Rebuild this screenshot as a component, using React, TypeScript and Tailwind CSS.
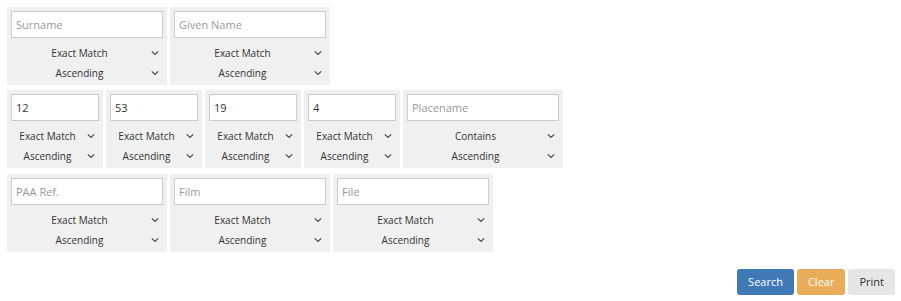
const font = { fontFamily: '"Open Sans", "Liberation Sans", sans-serif' };

type Field = {
  placeholder: string;
  value?: string;
  match: string;
  narrow?: boolean;
};

const rows: Field[][] = [
  [
    { placeholder: "Surname", match: "Exact Match" },
    { placeholder: "Given Name", match: "Exact Match" },
  ],
  [
    { placeholder: "", value: "12", match: "Exact Match", narrow: true },
    { placeholder: "", value: "53", match: "Exact Match", narrow: true },
    { placeholder: "", value: "19", match: "Exact Match", narrow: true },
    { placeholder: "", value: "4", match: "Exact Match", narrow: true },
    { placeholder: "Placename", match: "Contains" },
  ],
  [
    { placeholder: "PAA Ref.", match: "Exact Match" },
    { placeholder: "Film", match: "Exact Match" },
    { placeholder: "File", match: "Exact Match" },
  ],
];

function Chevron() {
  return (
    <svg width="8" height="5" viewBox="0 0 8 5" className="absolute right-[4px] top-1/2 -translate-y-1/2">
      <path d="M0.8 0.8 L4 3.9 L7.2 0.8" fill="none" stroke="#444" strokeWidth="1.1" />
    </svg>
  );
}

function SelectRow({ label }: { label: string }) {
  return (
    <div className="relative flex h-[20px] items-center pl-[2px] pr-[17px] text-[10px] text-[#333]">
      <span className="block w-full whitespace-nowrap text-center">{label}</span>
      <Chevron />
    </div>
  );
}

function FieldCard({ f }: { f: Field }) {
  return (
    <div
      className={`flex flex-col bg-[#f0f0f0] px-[4px] pt-[4px] pb-[2px] ${f.narrow ? "w-[96px]" : "w-[160px]"}`}
    >
      <input
        readOnly
        defaultValue={f.value}
        placeholder={f.placeholder}
        className="h-[27px] w-full border border-[#cccccc] bg-white px-[4px] text-[11px] text-[#333] placeholder:text-[#999] outline-none"
        style={font}
      />
      <div className="mt-[5px] flex flex-col">
        <SelectRow label={f.match} />
        <SelectRow label="Ascending" />
      </div>
    </div>
  );
}

export default function App() {
  return (
    <div className="w-[901px] h-[301px] bg-white p-[7px] pr-[6px]" style={font}>
      <div className="flex flex-col">
        {rows.map((row, i) => (
          <div key={i} className={`flex gap-[3px] ${i === 1 ? "mt-[5px]" : i === 2 ? "mt-[6px]" : ""}`}>
            {row.map((f, j) => (
              <FieldCard key={j} f={f} />
            ))}
          </div>
        ))}
      </div>
      <div className="mt-[17px] flex justify-end gap-[3px]">
        <button className="h-[26px] rounded-[3px] bg-[#3f7ab6] px-[11px] text-[11px] text-white">Search</button>
        <button className="h-[26px] rounded-[3px] bg-[#e9ad5a] px-[11px] text-[11px] text-white">Clear</button>
        <button className="h-[26px] rounded-[3px] bg-[#e6e6e6] px-[11px] text-[11px] text-[#333]">Print</button>
      </div>
    </div>
  );
}
